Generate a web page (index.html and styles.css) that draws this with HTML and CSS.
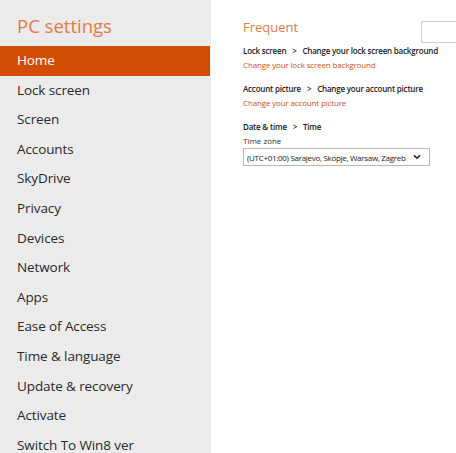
FILE: index.html
```html
<!DOCTYPE html>
<html lang="en">
<head>
    <meta charset="UTF-8">
    <title>PC settings</title>
    <link rel="stylesheet" href="styles.css">
</head>
<body>
    <div class="janela">
        <div class="menu">
            <h1>PC settings</h1>
            <ul>
                <li class="ativo">Home</li>
                <li>Lock screen</li>
                <li>Screen</li>
                <li>Accounts</li>
                <li>SkyDrive</li>
                <li>Privacy</li>
                <li>Devices</li>
                <li>Network</li>
                <li>Apps</li>
                <li>Ease of Access</li>
                <li>Time &amp; language</li>
                <li>Update &amp; recovery</li>
                <li>Activate</li>
                <li>Switch To Win8 ver</li>
            </ul>
        </div>
        <div class="conteudo">
            <div class="topo">
                <h2>Frequent</h2>
                <input type="text" class="busca">
            </div>
            <div class="grupo">
                <p class="caminho">Lock screen <span class="seta">&gt;</span> Change your lock screen background</p>
                <a href="#" class="link">Change your lock screen background</a>
            </div>
            <div class="grupo">
                <p class="caminho">Account picture <span class="seta">&gt;</span> Change your account picture</p>
                <a href="#" class="link">Change your account picture</a>
            </div>
            <div class="grupo">
                <p class="caminho">Date &amp; time <span class="seta">&gt;</span> Time</p>
                <p class="rotulo">Time zone</p>
                <div class="select-fuso">
                    <span>(UTC+01:00) Sarajevo, Skopje, Warsaw, Zagreb</span>
                    <svg width="8" height="6" viewBox="0 0 8 6"><path d="M1 1.2 L4 4.2 L7 1.2" fill="none" stroke="#222" stroke-width="1.6"/></svg>
                </div>
            </div>
        </div>
    </div>
</body>
</html>
```

FILE: styles.css
```css
body {
    margin: 0;
    background-color: #fff;
    font-family: "Open Sans", "Noto Sans", sans-serif;
    color: #222;
}

.janela {
    display: flex;
    height: 453px;
    overflow: hidden;
}

.menu {
    width: 211px;
    background-color: #ebebeb;
    flex-shrink: 0;
}

.menu h1 {
    margin: 0;
    padding: 13px 0 0 17px;
    height: 33px;
    line-height: 26px;
    font-size: 18.5px;
    font-weight: 400;
    color: #e07a48;
}

.menu ul {
    list-style: none;
    margin: 0;
    padding: 0;
}

.menu li {
    height: 29.6px;
    line-height: 28px;
    padding-left: 17px;
    font-size: 13.5px;
    color: #2a2a2a;
    letter-spacing: -0.1px;
    white-space: nowrap;
}

.menu li.ativo {
    background-color: #d24d04;
    color: #fff;
    width: 193px;
}

.conteudo {
    flex: 1;
    padding-left: 32px;
    font-size: 8px;
    white-space: nowrap;
}

.topo {
    display: flex;
    justify-content: space-between;
    align-items: flex-start;
    height: 44px;
}

.topo h2 {
    margin: 0;
    padding-top: 17px;
    line-height: 20px;
    font-size: 13px;
    font-weight: 400;
    color: #e07a48;
}

.busca {
    margin-top: 21px;
    width: 34px;
    height: 20px;
    border: 1px solid #d0d0d0;
    border-right: none;
    padding: 0;
}

.grupo {
    margin-bottom: 10px;
}

.caminho {
    margin: 0;
    font-weight: 600;
    color: #1a1a1a;
    line-height: 14px;
    letter-spacing: -0.2px;
}

.seta {
    margin: 0 4px;
}

.link {
    display: block;
    color: #c8531a;
    text-decoration: none;
    line-height: 14px;
    letter-spacing: -0.15px;
}

.rotulo {
    margin: 0;
    line-height: 13px;
    color: #333;
}

.select-fuso {
    margin-top: 1px;
    box-sizing: border-box;
    width: 187px;
    height: 18px;
    border: 1px solid #b8b8b8;
    display: flex;
    align-items: center;
    justify-content: space-between;
    padding: 0 8px 0 3px;
    color: #222;
    letter-spacing: -0.3px;
}

.select-fuso svg {
    flex-shrink: 0;
}
```
